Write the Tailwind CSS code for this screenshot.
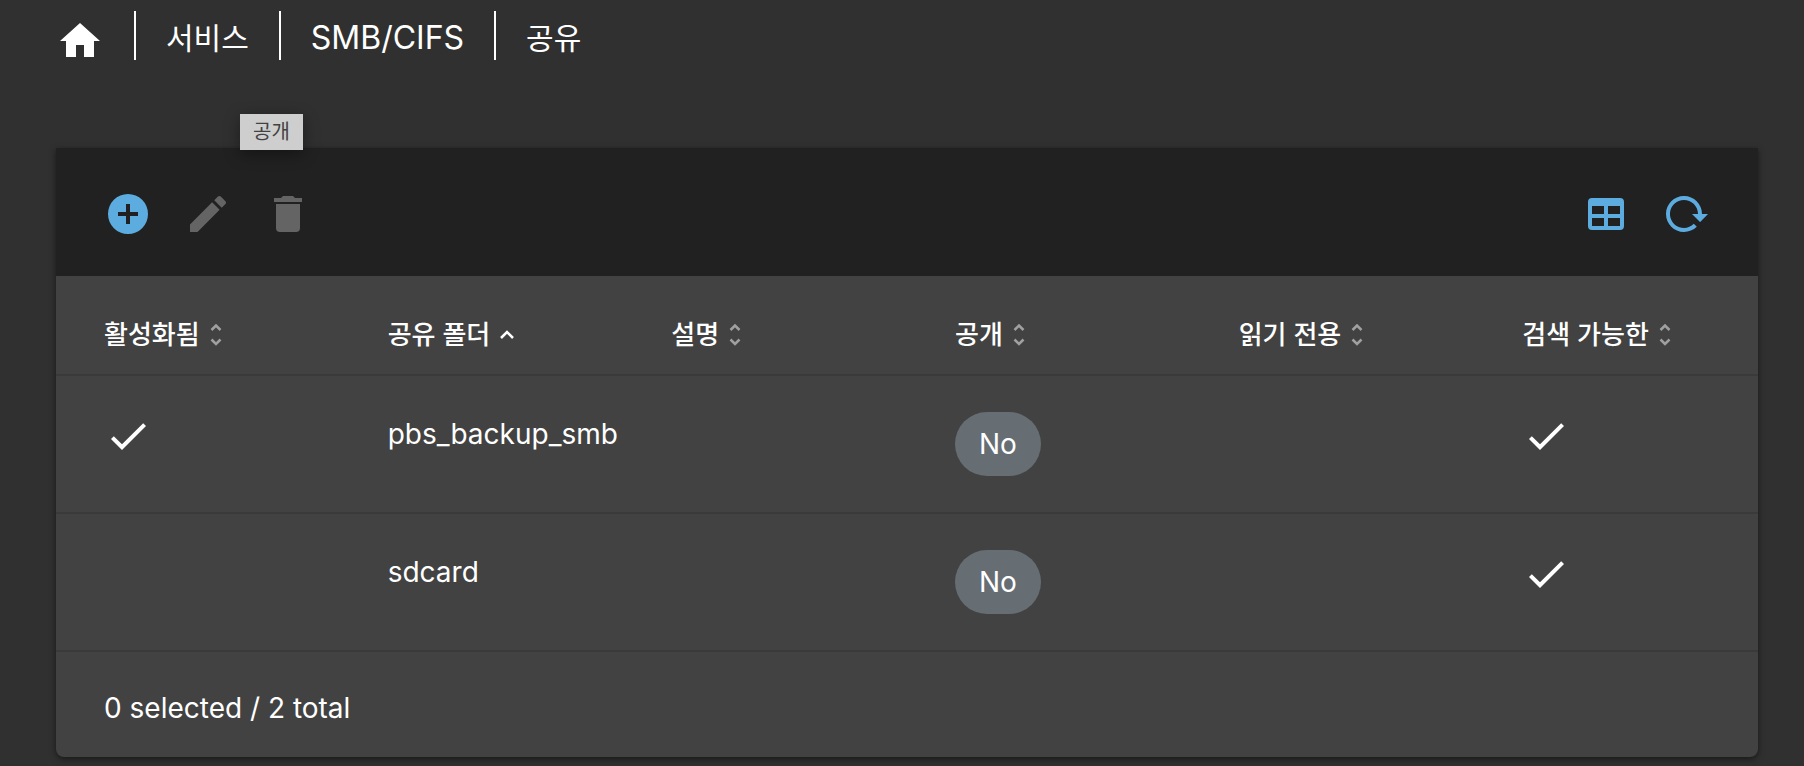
<!DOCTYPE html>
<html lang="ko">
<head>
<meta charset="utf-8">
<meta name="viewport" content="width=device-width, initial-scale=1">
<title>공유</title>
<script src="https://cdn.jsdelivr.net/npm/@tailwindcss/browser@4"></script>
</head>
<body class="min-h-screen bg-[#303030] text-white font-['Inter','Noto_Sans_CJK_KR',sans-serif]">
<svg class="hidden" aria-hidden="true">
  <symbol id="check" viewBox="0 0 24 24"><path d="M21,7L9,19L3.5,13.5L4.91,12.09L9,16.17L19.59,5.59L21,7Z"/></symbol>
  <symbol id="sort" viewBox="0 0 12 22"><path d="M1.5 6L6 1.5L10.500 6M1.500 15.500L6 20L10.500 15.500" fill="none" stroke="currentColor" stroke-width="2.500"/></symbol>
</svg>

<nav aria-label="Breadcrumb" class="pl-14 pt-[11px]">
  <ol class="flex h-[49px] items-stretch text-[32px] leading-[54px]">
    <li class="pr-[30px]"><a href="#" aria-label="Home" class="flex h-full items-center pt-[11px]"><svg class="size-12 fill-current" viewBox="0 0 24 24"><path d="M10,20V14H14V20H19V12H22L12,3L2,12H5V20H10Z"/></svg></a></li>
    <li class="border-l-2 border-white px-[30px]"><a href="#" class="text-[30px]">서비스</a></li>
    <li class="border-l-2 border-white px-[30px]"><a href="#">SMB/CIFS</a></li>
    <li class="border-l-2 border-white px-[30px]"><a href="#" class="text-[30px]" aria-current="page">공유</a></li>
  </ol>
</nav>

<main class="relative mt-[88px] mr-[46px] ml-14 rounded-b-lg bg-[#424242] shadow-[0_2px_6px_rgba(0,0,0,0.5)]">
  <div role="tooltip" class="absolute -top-[34px] left-[184px] bg-[#cecece] px-[13px] text-[20px] leading-9 text-[#424242] shadow-[0_4px_16px_rgba(0,0,0,0.4)]">공개</div>

  <div class="flex h-32 items-center justify-between bg-[#212121] px-12 pt-1">
    <div class="flex gap-8">
      <button type="button" aria-label="Add" class="text-[#5dacdf]"><svg class="size-12 fill-current" viewBox="0 0 24 24"><path d="M17,13H13V17H11V13H7V11H11V7H13V11H17M12,2A10,10 0 0,0 2,12A10,10 0 0,0 12,22A10,10 0 0,0 22,12A10,10 0 0,0 12,2Z"/></svg></button>
      <button type="button" aria-label="Edit" disabled class="text-[#646464]"><svg class="size-12 fill-current" viewBox="0 0 24 24"><path d="M20.710,7.040C21.100,6.650 21.100,6 20.710,5.630L18.370,3.290C18,2.900 17.350,2.900 16.960,3.290L15.120,5.120L18.870,8.870M3,17.250V21H6.750L17.810,9.930L14.060,6.180L3,17.250Z"/></svg></button>
      <button type="button" aria-label="Delete" disabled class="text-[#646464]"><svg class="size-12 fill-current" viewBox="0 0 24 24"><path d="M19,4H15.500L14.500,3H9.500L8.500,4H5V6H19M6,19A2,2 0 0,0 8,21H16A2,2 0 0,0 18,19V7H6V19Z"/></svg></button>
    </div>
    <div class="flex gap-8 text-[#5dacdf]">
      <button type="button" aria-label="Columns"><svg class="size-12 fill-current" viewBox="0 0 24 24"><path d="M5,4H19A2,2 0 0,1 21,6V18A2,2 0 0,1 19,20H5A2,2 0 0,1 3,18V6A2,2 0 0,1 5,4M5,8V12H11V8H5M13,8V12H19V8H13M5,14V18H11V14H5M13,14V18H19V14H13Z"/></svg></button>
      <button type="button" aria-label="Reload"><svg class="size-12 fill-current" viewBox="0 0 24 24"><path d="M2 12C2 16.970 6.030 21 11 21C13.390 21 15.680 20.060 17.400 18.400L15.900 16.900C14.630 18.250 12.860 19 11 19C4.760 19 1.640 11.460 6.050 7.050C10.460 2.640 18 5.770 18 12H15L19 16H19.100L23 12H20C20 7.030 15.970 3 11 3C6.030 3 2 7.030 2 12Z"/></svg></button>
    </div>
  </div>

  <table class="w-full table-fixed border-collapse text-left text-[28px] leading-[45px]">
    <thead>
      <tr class="text-[26px] leading-9 whitespace-nowrap shadow-[inset_0_-2px_0_#3a3a3a]">
        <th scope="col" class="pt-[41px] pr-0 pb-[23px] pl-12 font-medium"><button type="button" class="flex items-center gap-2.5">활성화됨<svg class="h-[22px] w-3 text-[#a0a0a0]"><use href="#sort"/></svg></button></th>
        <th scope="col" aria-sort="ascending" class="pt-[41px] pr-0 pb-[23px] pl-12 font-medium"><button type="button" class="flex items-center gap-2.5">공유 폴더<svg class="h-[10px] w-[14px]" viewBox="0 0 14 10"><path d="M1 8L7 2L13 8" fill="none" stroke="currentColor" stroke-width="2.500"/></svg></button></th>
        <th scope="col" class="pt-[41px] pr-0 pb-[23px] pl-12 font-medium"><button type="button" class="flex items-center gap-2.5">설명<svg class="h-[22px] w-3 text-[#a0a0a0]"><use href="#sort"/></svg></button></th>
        <th scope="col" class="pt-[41px] pr-0 pb-[23px] pl-12 font-medium"><button type="button" class="flex items-center gap-2.5">공개<svg class="h-[22px] w-3 text-[#a0a0a0]"><use href="#sort"/></svg></button></th>
        <th scope="col" class="pt-[41px] pr-0 pb-[23px] pl-12 font-medium"><button type="button" class="flex items-center gap-2.5">읽기 전용<svg class="h-[22px] w-3 text-[#a0a0a0]"><use href="#sort"/></svg></button></th>
        <th scope="col" class="pt-[41px] pr-0 pb-[23px] pl-12 font-medium"><button type="button" class="flex items-center gap-2.5">검색 가능한<svg class="h-[22px] w-3 text-[#a0a0a0]"><use href="#sort"/></svg></button></th>
      </tr>
    </thead>
    <tbody>
      <tr class="align-top shadow-[inset_0_-2px_0_#3a3a3a]">
        <td class="pt-9 pl-12"><svg class="size-12 fill-current" role="img" aria-label="Yes"><use href="#check"/></svg></td>
        <td class="pt-9 pl-12">pbs_backup_smb</td>
        <td></td>
        <td class="pt-9 pb-[38px] pl-12"><span class="flex h-16 w-fit items-center rounded-[32px] bg-[#666d73] px-6">No</span></td>
        <td></td>
        <td class="pt-9 pl-12"><svg class="size-12 fill-current" role="img" aria-label="Yes"><use href="#check"/></svg></td>
      </tr>
      <tr class="align-top shadow-[inset_0_-2px_0_#3a3a3a]">
        <td></td>
        <td class="pt-9 pl-12">sdcard</td>
        <td></td>
        <td class="pt-9 pb-[38px] pl-12"><span class="flex h-16 w-fit items-center rounded-[32px] bg-[#666d73] px-6">No</span></td>
        <td></td>
        <td class="pt-9 pl-12"><svg class="size-12 fill-current" role="img" aria-label="Yes"><use href="#check"/></svg></td>
      </tr>
    </tbody>
  </table>

  <footer class="px-12 pt-[34px] pb-[27px] text-[28px] leading-[44px]">0 selected / 2 total</footer>
</main>
</body>
</html>
